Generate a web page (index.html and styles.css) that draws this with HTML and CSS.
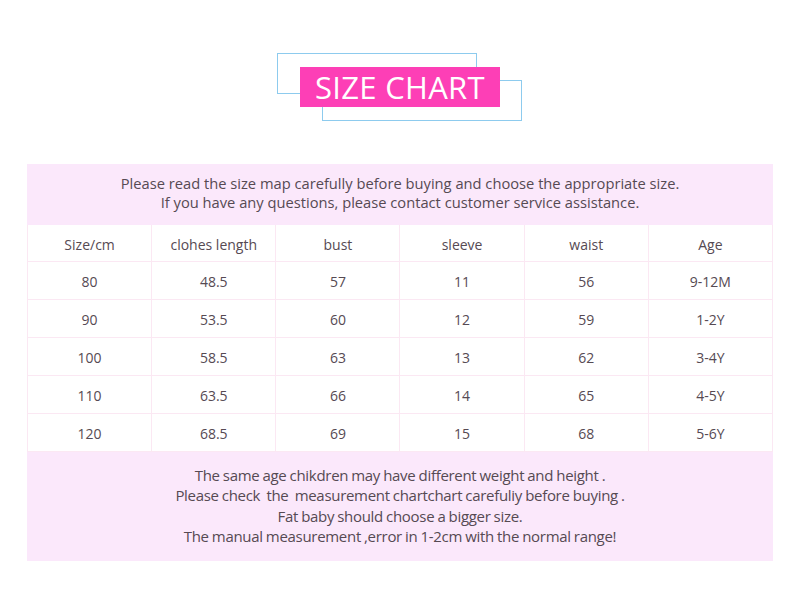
FILE: index.html
```html
<!DOCTYPE html>
<html>
<head>
<meta charset="utf-8">
<link rel="stylesheet" href="styles.css">
</head>
<body>
<div class="page">
  <div class="title-wrap">
    <div class="frame frame-a"></div>
    <div class="frame frame-b"></div>
    <div class="title">SIZE CHART</div>
  </div>
  <div class="chart">
    <div class="note note-top">
      <p>Please read the size map carefully before buying and choose the appropriate size.</p>
      <p>If you have any questions, please contact customer service assistance.</p>
    </div>
    <div class="grid">
      <div class="cell">Size/cm</div><div class="cell">clohes length</div><div class="cell">bust</div><div class="cell">sleeve</div><div class="cell">waist</div><div class="cell">Age</div>
      <div class="cell">80</div><div class="cell">48.5</div><div class="cell">57</div><div class="cell">11</div><div class="cell">56</div><div class="cell">9-12M</div>
      <div class="cell">90</div><div class="cell">53.5</div><div class="cell">60</div><div class="cell">12</div><div class="cell">59</div><div class="cell">1-2Y</div>
      <div class="cell">100</div><div class="cell">58.5</div><div class="cell">63</div><div class="cell">13</div><div class="cell">62</div><div class="cell">3-4Y</div>
      <div class="cell">110</div><div class="cell">63.5</div><div class="cell">66</div><div class="cell">14</div><div class="cell">65</div><div class="cell">4-5Y</div>
      <div class="cell">120</div><div class="cell">68.5</div><div class="cell">69</div><div class="cell">15</div><div class="cell">68</div><div class="cell">5-6Y</div>
    </div>
    <div class="note note-bottom">
      <p>The same age chikdren may have different weight and height .</p>
      <p>Please check &nbsp;the &nbsp;measurement chartchart carefuliy before buying .</p>
      <p>Fat baby should choose a bigger size.</p>
      <p>The manual measurement ,error in 1-2cm with the normal range!</p>
    </div>
  </div>
</div>
</body>
</html>
```
FILE: styles.css
```css
html, body {
  margin: 0;
  padding: 0;
  background: #ffffff;
}
.page {
  width: 800px;
  height: 600px;
  font-family: "Open Sans", "Noto Sans", sans-serif;
  color: #564a53;
  padding-top: 53px;
  box-sizing: border-box;
}
.title-wrap {
  position: relative;
  width: 246px;
  height: 69px;
  margin-left: 277px;
}
.frame {
  position: absolute;
  width: 200px;
  height: 41px;
  border: 1.5px solid #8dcbee;
  box-sizing: border-box;
}
.frame-a { left: 0; top: 0; }
.frame-b { left: 45px; top: 27px; }
.title {
  position: absolute;
  left: 23px;
  top: 14px;
  width: 200px;
  height: 40px;
  background: #fd3fb6;
  color: #ffffff;
  font-size: 31px;
  line-height: 40px;
  text-align: center;
  letter-spacing: 0.3px;
}
.chart {
  width: 746px;
  margin: 42px 0 0 27px;
}
.note {
  background: #fbe8fb;
  text-align: center;
}
.note p { margin: 0; }
.note-top {
  height: 61px;
  padding-top: 10px;
  box-sizing: border-box;
  font-size: 14.7px;
  line-height: 19px;
}
.grid {
  display: grid;
  grid-template-columns: repeat(6, 1fr);
  grid-template-rows: 37px repeat(5, 38px);
  background: #ffffff;
  border-left: 1px solid #fbe8f3;
}
.cell {
  display: flex;
  align-items: center;
  justify-content: center;
  font-size: 14px;
  padding-top: 2px;
  border-right: 1px solid #fbe8f3;
  border-bottom: 1px solid #fbe8f3;
}
.note-bottom {
  height: 109px;
  padding-top: 13px;
  box-sizing: border-box;
  font-size: 15px;
  line-height: 20.3px;
  letter-spacing: -0.3px;
  word-spacing: -0.5px;
}
```
